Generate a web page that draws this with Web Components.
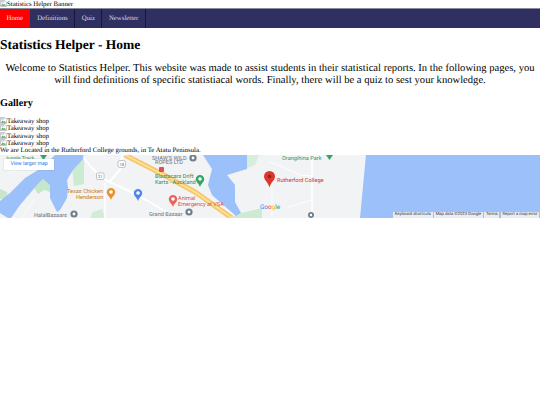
<!DOCTYPE html>
<html lang="en">
<head>
<meta charset="utf-8">
<title>Statistics Helper - Home</title>
<style>
html, body { margin: 0; padding: 0; background: #fff; }
body { font-family: "Liberation Serif", serif; font-size: 6.8px; color: #000; text-rendering: geometricPrecision; }
</style>
</head>
<body>
<broken-image>Statistics Helper Banner</broken-image>
<site-nav>
  <nav-link selected>Home</nav-link>
  <nav-link>Definitions</nav-link>
  <nav-link>Quiz</nav-link>
  <nav-link>Newsletter</nav-link>
</site-nav>
<page-intro heading="Statistics Helper - Home">
  Welcome to Statistics Helper. This website was made to assist students in their statistical reports. In the following pages, you will find definitions of specific statistiacal words. Finally, there will be a quiz to sest your knowledge.
</page-intro>
<photo-gallery heading="Gallery">
  <broken-image>Takeaway shop</broken-image>
  <broken-image>Takeaway shop</broken-image>
  <broken-image>Takeaway shop</broken-image>
  <broken-image>Takeaway shop</broken-image>
</photo-gallery>
<map-embed caption="We are Located in the Rutherford College grounds, in Te Atatu Peninsula."></map-embed>

<script>
class BrokenImage extends HTMLElement {
    constructor() {
        super();
        this.attachShadow({ mode: 'open' }).innerHTML = `
<style>
:host{ display: block; height: 7.5px; line-height: 7.5px; white-space: nowrap; }
svg{ width: 7px; height: 7px; vertical-align: -1px; }
</style>
<svg viewBox="0 0 16 16">
  <path d="M1 1h10l4 4v10H1z" fill="#fff" stroke="#a0a0a0" stroke-width="1.4"/>
  <path d="M2 13l4-5 3 3 2-2 3 4z" fill="#5aa55a"/>
  <path d="M2 2h8v4H2z" fill="#bcd3f2"/>
</svg><slot></slot>`;
    }
}

class SiteNav extends HTMLElement {
    constructor() {
        super();
        this.attachShadow({ mode: 'open' }).innerHTML = `
<style>
:host{ display: flex; height: 20px; background: #2f3061; box-sizing: border-box; border-top: 1px solid #8a8a9a; }
</style>
<slot></slot>`;
    }
}

class NavLink extends HTMLElement {
    constructor() {
        super();
        this.attachShadow({ mode: 'open' }).innerHTML = `
<style>
:host{ display: flex; align-items: center; padding: 0 6.5px; color: #d8d8e4; border-right: 1px solid #16163a; font-size: 6.8px; }
:host([selected]){ background: #ff0000; color: #f4e4e4; border-right-color: #2f3061; }
</style>
<slot></slot>`;
    }
}

class PageIntro extends HTMLElement {
    constructor() {
        super();
        this.attachShadow({ mode: 'open' }).innerHTML = `
<style>
:host{ display: block; }
h1{ margin: 9px 0 10px; font-size: 13.5px; line-height: 16px; font-weight: bold; }
p{ margin: 0; font-size: 10.6px; line-height: 12px; text-align: center; }
</style>
<h1></h1>
<p><slot></slot></p>`;
        this.shadowRoot.querySelector('h1').textContent = this.getAttribute('heading');
    }
}

class PhotoGallery extends HTMLElement {
    constructor() {
        super();
        this.attachShadow({ mode: 'open' }).innerHTML = `
<style>
:host{ display: block; }
h2{ margin: 11px 0 7px; font-size: 10.2px; line-height: 12px; font-weight: bold; }
</style>
<h2></h2>
<slot></slot>`;
        this.shadowRoot.querySelector('h2').textContent = this.getAttribute('heading');
    }
}

class MapEmbed extends HTMLElement {
    constructor() {
        super();
        this.attachShadow({ mode: 'open' }).innerHTML = `
<style>
:host{ display: block; }
.caption{ height: 8px; line-height: 8px; white-space: nowrap; position: relative; z-index: 1; }
.map{ position: relative; height: 63px; overflow: hidden; background: #f1f3f4; }
svg{ display: block; }
text{ font-family: Roboto, "Liberation Sans", sans-serif; font-size: 5.6px; }
.button{ position: absolute; left: 4px; top: 4px; width: 50px; height: 11px; background: #fff; color: #1a73e8; font: 5.2px/10px Roboto, "Liberation Sans", sans-serif; padding-left: 6.5px; box-sizing: border-box; box-shadow: 0 0 1px rgba(0,0,0,.25); }
.credits{ position: absolute; right: 1px; bottom: 0; display: flex; gap: 1.5px; font: 4.2px/6px Roboto, "Liberation Sans", sans-serif; color: #333; }
.credits span{ background: rgba(245,245,245,.85); padding: 0 1.6px; white-space: nowrap; }
</style>
<div class="caption"></div>
<div class="map">
<svg width="540" height="63" viewBox="0 155 540 63">
  <!-- green patches -->
  <path d="M0 189L7 192 8 200 0 199z" fill="#c8e6cc"/>
  <path d="M72 168L84 158 84 184 74 186z" fill="#cdebd3"/>
  <path d="M34 188L43 179 50 184 50 192 44 190 38 194z" fill="#c5e8c9"/>
  <path d="M237 214L262 208 262 218 232 218z" fill="#cdebd3"/>
  <path d="M247 155H259L255 165 247 168z" fill="#d6eeda"/>
  <path d="M93 212l9-3 3 9H90z" fill="#d3ecd6"/>
  <!-- water -->
  <path d="M55 155L43 167 25 178 10 193 0 201V213L8 218H11L20 205 37 185 43 179 50 185 50 198 57 212 60 210 67 198 68 188 67 180 73 170 84 158 83 155z" fill="#9cc0f9"/>
  <path d="M203 155L212 169 208 185 212 195 236 216 241 213 235 202 235 185 227 175 247 169V155z" fill="#9cc0f9"/>
  <path d="M366 155L360 218H540V155z" fill="#9cc0f9"/>
  <!-- roads -->
  <g fill="none" stroke="#fff" stroke-linecap="round">
    <path d="M84 158L92 168 107 181 125 189 150 202 176 218" stroke-width="2"/>
    <path d="M122 155L120 170 109 182" stroke-width="2"/>
    <path d="M105 183V218" stroke-width="1.4"/>
    <path d="M312 155V218" stroke-width="1.6"/>
    <path d="M270 162L285 168 300 175 312 176M272 188V218M312 200L288 207" stroke-width=".9"/>
    <path d="M22 218L34 200M30 166L10 172" stroke-width=".8"/>
  </g>
  <path d="M125 155L160 173 195 192 232 218" fill="none" stroke="#f6c66f" stroke-width="5"/>
  <path d="M125 155L160 173 195 192 232 218" fill="none" stroke="#fde293" stroke-width="1.6"/>
  <!-- pins -->
  <path d="M111 188a4.200 4.200 0 0 1 4.200 4.200c0 2.800-3 4-4.200 7.800-1.200-3.800-4.200-5-4.200-7.800a4.200 4.200 0 0 1 4.200-4.200z" fill="#e8912d"/>
  <path d="M138 189a4.200 4.200 0 0 1 4.200 4.200c0 2.800-3 4-4.200 7.800-1.200-3.800-4.200-5-4.200-7.800a4.200 4.200 0 0 1 4.200-4.200z" fill="#4f87ea"/>
  <path d="M173 195a4.200 4.200 0 0 1 4.200 4.200c0 2.800-3 4-4.200 7.800-1.200-3.800-4.200-5-4.200-7.800a4.200 4.200 0 0 1 4.200-4.200z" fill="#e9635b"/>
  <path d="M200 175a4.200 4.200 0 0 1 4.200 4.200c0 2.800-3 4-4.200 7.800-1.200-3.800-4.200-5-4.200-7.800a4.200 4.200 0 0 1 4.200-4.200z" fill="#34a56a"/>
  <circle cx="111" cy="192" r="1.800" fill="#fff"/><circle cx="138" cy="193" r="1.800" fill="#fff"/>
  <circle cx="173" cy="199" r="1.800" fill="#fff"/><circle cx="200" cy="179" r="1.800" fill="#fff"/>
  <circle cx="74" cy="214" r="3.600" fill="#6f7f8e"/><circle cx="74" cy="214" r="1.400" fill="#fff"/>
  <circle cx="189" cy="212" r="3.600" fill="#6f7f8e"/><circle cx="189" cy="212" r="1.400" fill="#fff"/>
  <circle cx="193" cy="158" r="3.600" fill="#6f7f8e"/><circle cx="193" cy="158" r="1.400" fill="#fff"/>
  <circle cx="311" cy="215" r="3" fill="#6f7f8e"/><circle cx="311" cy="215" r="1.200" fill="#fff"/>
  <path d="M40 155h7l-3.500 5zM326 155h7l-3.500 5z" fill="#34a56a"/>
  <path d="M269.500 171a5.500 5.500 0 0 1 5.500 5.500c0 3.800-4 5.500-5.500 11-1.500-5.500-5.500-7.200-5.500-11a5.500 5.500 0 0 1 5.500-5.500z" fill="#d9382e"/>
  <circle cx="269.500" cy="176.500" r="1.800" fill="#a31d18"/>
  <!-- shields -->
  <rect x="118" y="160.500" width="7.500" height="7" rx="2" fill="#fff" stroke="#9aa0a6" stroke-width=".6"/>
  <rect x="96.500" y="173" width="7.500" height="6.500" rx="1" fill="#fff" stroke="#9aa0a6" stroke-width=".6"/>
  <rect x="159" y="167" width="5" height="5" rx="1" fill="#d9505a"/>
  <text x="119.500" y="166" fill="#555" style="font-size:4px">18</text>
  <text x="98" y="178" fill="#555" style="font-size:4px">21</text>
  <!-- labels -->
  <text x="5" y="160" fill="#2f8a55" style="font-size:5.2px">Jungle Track</text>
  <text x="282" y="159.500" fill="#3a9160">Orangihina Park</text>
  <text x="277" y="182" fill="#c5362f">Rutherford College</text>
  <text x="152" y="159.500" fill="#6b7280">SHAW'S WILD</text>
  <text x="155" y="164" fill="#6b7280">ROPES LTD</text>
  <text x="155" y="178" fill="#2f8a55">Blastacars Drift</text>
  <text x="155" y="184" fill="#2f8a55">Karts - Auckland</text>
  <text x="178" y="200" fill="#d9534a">Animal</text>
  <text x="178" y="206" fill="#d9534a">Emergency at VSA</text>
  <text x="67" y="193" fill="#c97a22">Texas Chicken</text>
  <text x="76" y="199" fill="#c97a22">Henderson</text>
  <text x="149" y="216" fill="#6b7280">Grand Bazaar</text>
  <text x="34" y="216.500" fill="#6b7280">HalalBazaars</text>
  <text x="260" y="209" fill="#4285f4" style="font-size:6.4px">Go<tspan fill="#ea4335">o</tspan><tspan fill="#fbbc05">g</tspan><tspan fill="#4285f4">l</tspan><tspan fill="#34a853">e</tspan></text>
</svg>
<div class="button">View larger map</div>
<div class="credits"><span>Keyboard shortcuts</span><span>Map data ©2023 Google</span><span>Terms</span><span>Report a map error</span></div>
</div>`;
        this.shadowRoot.querySelector('.caption').textContent = this.getAttribute('caption');
    }
}

customElements.define('broken-image', BrokenImage);
customElements.define('site-nav', SiteNav);
customElements.define('nav-link', NavLink);
customElements.define('page-intro', PageIntro);
customElements.define('photo-gallery', PhotoGallery);
customElements.define('map-embed', MapEmbed);
</script>
</body>
</html>
